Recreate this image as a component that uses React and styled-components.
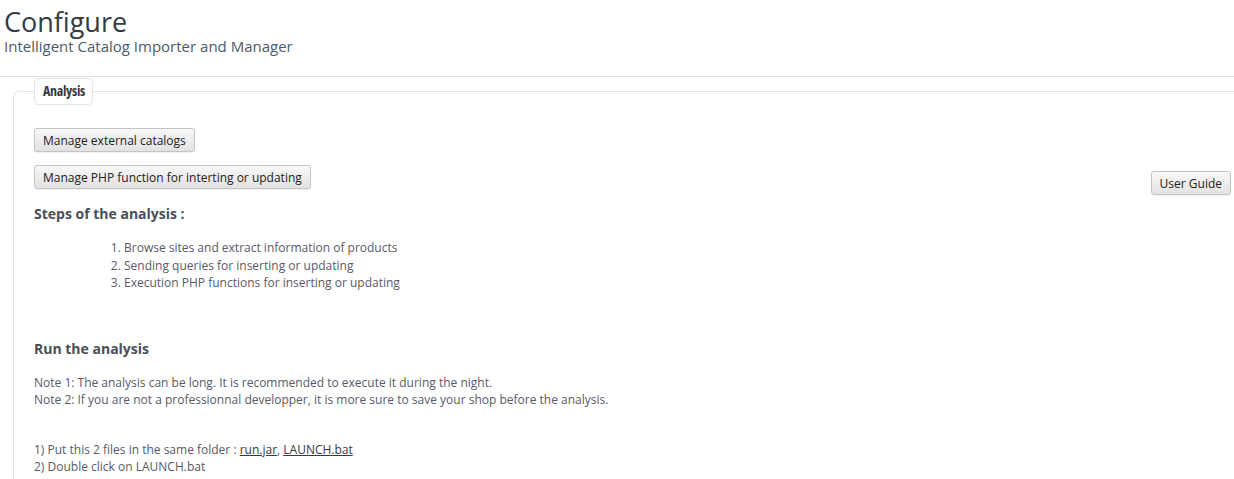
import React from 'react';
import styled, { createGlobalStyle } from 'styled-components';

const GlobalStyle = createGlobalStyle`
  body {
    margin: 0;
    background: #fff;
    font-family: 'Open Sans', 'Liberation Sans', sans-serif;
    color: #585a69;
  }
`;

const Page = styled.div`
  width: 1234px;
  height: 479px;
  overflow: hidden;
`;

const Header = styled.div`
  padding: 7px 0 0 4px;
  height: 77px;
  border-bottom: 1px solid #e0e0e0;
  box-sizing: border-box;
`;

const Title = styled.h1`
  margin: 0;
  font-size: 27px;
  font-weight: 400;
  line-height: 30px;
  color: #363a41;
`;

const Subtitle = styled.div`
  font-size: 15px;
  line-height: 18px;
  color: #4d5a6a;
`;

const Fieldset = styled.fieldset`
  margin: 1px 0 0 13px;
  padding: 23px 0 0 20px;
  border: 1px solid #e3e3e3;
  border-right: none;
  border-bottom: none;
  border-radius: 6px 0 0 0;
  min-height: 400px;
`;

const Legend = styled.legend`
  margin-left: 0;
  padding: 4px 7px 5px 8px;
  border: 1px solid #e3e3e3;
  border-radius: 5px;
  background: #fff;
  font-size: 14px;
  font-weight: 700;
  font-stretch: 75%;
  letter-spacing: -0.3px;
  color: #363a41;
  line-height: 16px;
`;

const TopRow = styled.div`
  display: flex;
  justify-content: space-between;
  align-items: flex-start;
  padding-right: 3px;
`;

const ButtonStack = styled.div`
  display: flex;
  flex-direction: column;
  align-items: flex-start;
  gap: 13px;
`;

const Button = styled.button`
  font-family: 'Open Sans', 'Liberation Sans', sans-serif;
  font-size: 12px;
  line-height: 16px;
  color: #222;
  padding: 4px 8px 2px;
  border: 1px solid #c4c4c4;
  border-radius: 3px;
  background: linear-gradient(#f8f8f8, #e2e2e2);
  box-shadow: 0 1px 1px rgba(0, 0, 0, 0.06);
  cursor: pointer;
`;

const GuideButton = styled(Button)`
  margin-top: 43px;
`;

const SectionTitle = styled.h3`
  margin: ${(p) => p.$top}px 0 0;
  font-size: 14px;
  font-weight: 700;
  line-height: 18px;
  color: #4a4e5a;
`;

const Steps = styled.ol`
  margin: 16px 0 0;
  padding-left: 90px;
  font-size: 12px;
  line-height: 17.5px;
  color: #585a69;
`;

const Notes = styled.div`
  margin-top: ${(p) => p.$top}px;
  font-size: 12px;
  line-height: 17.5px;
  color: #585a69;
`;

const FileLink = styled.a`
  color: #363a41;
  text-decoration: underline;
`;

export default function App() {
  return (
    <Page>
      <GlobalStyle />
      <Header>
        <Title>Configure</Title>
        <Subtitle>Intelligent Catalog Importer and Manager</Subtitle>
      </Header>
      <Fieldset>
        <Legend>Analysis</Legend>
        <TopRow>
          <ButtonStack>
            <Button>Manage external catalogs</Button>
            <Button>Manage PHP function for interting or updating</Button>
          </ButtonStack>
          <GuideButton>User Guide</GuideButton>
        </TopRow>
        <SectionTitle $top={10}>Steps of the analysis :</SectionTitle>
        <Steps>
          <li>Browse sites and extract information of products</li>
          <li>Sending queries for inserting or updating</li>
          <li>Execution PHP functions for inserting or updating</li>
        </Steps>
        <SectionTitle $top={48}>Run the analysis</SectionTitle>
        <Notes $top={16}>
          Note 1: The analysis can be long. It is recommended to execute it during the night.
          <br />
          Note 2: If you are not a professionnal developper, it is more sure to save your shop before the analysis.
        </Notes>
        <Notes $top={32}>
          1) Put this 2 files in the same folder : <FileLink href="#">run.jar</FileLink>,{' '}
          <FileLink href="#">LAUNCH.bat</FileLink>
          <br />
          2) Double click on LAUNCH.bat
        </Notes>
      </Fieldset>
    </Page>
  );
}
